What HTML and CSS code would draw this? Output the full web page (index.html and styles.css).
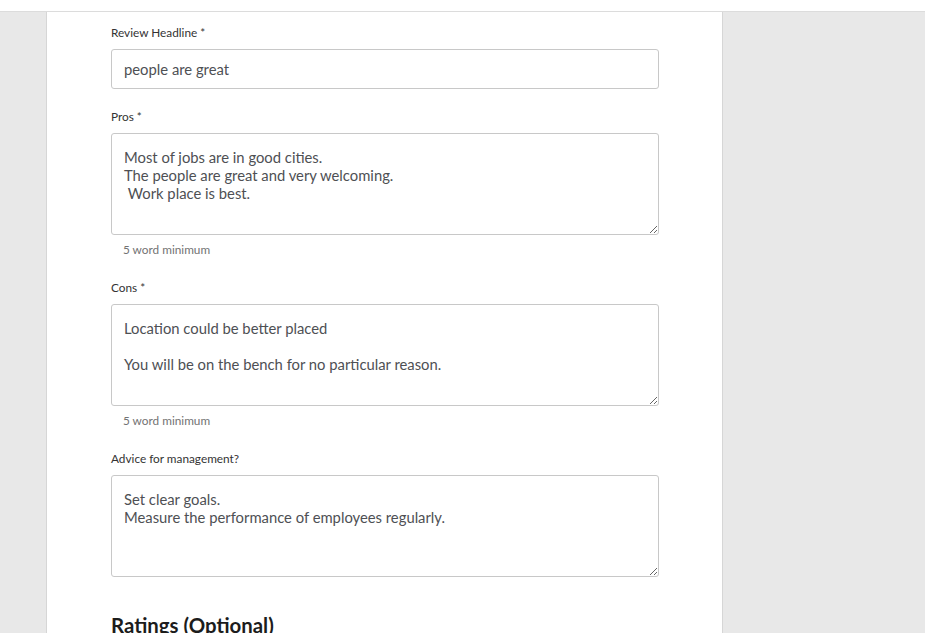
FILE: index.html
```html
<!DOCTYPE html>
<html>
<head>
<meta charset="utf-8">
<link rel="stylesheet" href="styles.css">
</head>
<body>
<div class="topbar"></div>
<div class="page">
  <div class="card">
    <div class="field">
      <label class="label">Review Headline *</label>
      <input class="input" type="text" value="people are great">
    </div>
    <div class="field">
      <label class="label">Pros *</label>
      <textarea class="textarea">Most of jobs are in good cities.
The people are great and very welcoming.
 Work place is best.</textarea>
      <div class="hint">5 word minimum</div>
    </div>
    <div class="field">
      <label class="label">Cons *</label>
      <textarea class="textarea">Location could be better placed

You will be on the bench for no particular reason.</textarea>
      <div class="hint">5 word minimum</div>
    </div>
    <div class="field">
      <label class="label">Advice for management?</label>
      <textarea class="textarea">Set clear goals.
Measure the performance of employees regularly.</textarea>
    </div>
    <h2 class="section-title">Ratings (Optional)</h2>
  </div>
</div>
</body>
</html>
```
FILE: styles.css
```css
html, body {
  margin: 0;
  padding: 0;
  height: 100%;
  overflow: hidden;
}
body {
  font-family: Lato, "Open Sans", sans-serif;
  background: #e8e8e8;
}
.topbar {
  height: 11px;
  background: #fff;
  border-bottom: 1px solid #dcdcdc;
}
.page {
  padding-left: 46px;
}
.card {
  box-sizing: border-box;
  width: 677px;
  min-height: 700px;
  background: #fff;
  border-left: 1px solid #d6d6d6;
  border-right: 1px solid #d6d6d6;
  padding: 13px 63px 40px 64px;
}
.field {
  display: flex;
  flex-direction: column;
  margin-bottom: 20px;
}
.field:has(.hint) {
  margin-bottom: 22px;
}
.label {
  font-size: 11.8px;
  line-height: 16px;
  color: #333;
  margin-bottom: 8px;
}
.input, .textarea {
  font-family: Lato, "Open Sans", sans-serif;
  font-size: 14.8px;
  color: #4e5054;
  border: 1px solid #c8c8c8;
  border-radius: 3px;
  background: #fff;
  box-sizing: border-box;
  width: 548px;
  outline: none;
  margin: 0;
}
.input {
  height: 40px;
  padding: 0 12px;
}
.textarea {
  height: 102px;
  padding: 14px 12px 15px;
  line-height: 18px;
  resize: vertical;
  display: block;
}
.hint {
  font-size: 11.8px;
  line-height: 16px;
  color: #737373;
  margin-top: 7px;
  padding-left: 12px;
}
.section-title {
  font-size: 20.4px;
  font-weight: 700;
  color: #1c1c1c;
  margin: 34px 0 0;
  line-height: 28px;
}
```
